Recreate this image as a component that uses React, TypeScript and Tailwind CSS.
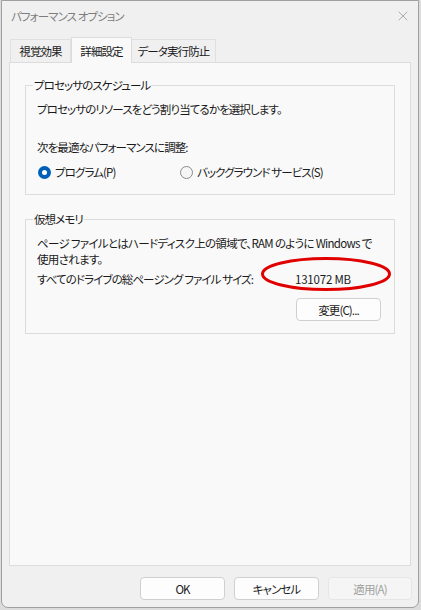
import { X } from "lucide-react";

const font = "font-['Noto_Sans_CJK_JP','Noto_Sans',sans-serif] [font-feature-settings:'palt']";

function Radio({ checked, label, className = "" }: { checked?: boolean; label: string; className?: string }) {
  return (
    <label className={`flex items-center gap-[4px] ${className}`}>
      {checked ? (
        <span className="flex h-[13px] w-[13px] items-center justify-center rounded-full bg-[#005fb8]">
          <span className="h-[5px] w-[5px] rounded-full bg-white" />
        </span>
      ) : (
        <span className="h-[13px] w-[13px] rounded-full border border-[#8a8a8a] bg-[#f6f6f6]" />
      )}
      <span>{label}</span>
    </label>
  );
}

function Button({ children, disabled }: { children: React.ReactNode; disabled?: boolean }) {
  return (
    <button
      className={
        disabled
          ? "h-[23px] w-[84px] rounded-[4px] border border-[#e6e6e6] bg-[#f5f5f5] text-[#a0a0a0]"
          : "h-[23px] w-[85px] rounded-[4px] border border-[#d0d0d0] bg-[#fdfdfd] text-[#1a1a1a]"
      }
    >
      {children}
    </button>
  );
}

function Group({ title, children, className = "" }: { title: string; children: React.ReactNode; className?: string }) {
  return (
    <fieldset className={`border border-[#dcdcdc] pl-[11px] pr-[13px] ${className}`}>
      <legend className="-ml-[4px] px-[1px] leading-[16px]">{title}</legend>
      {children}
    </fieldset>
  );
}

export default function App() {
  return (
    <div className={`h-[610px] w-[421px] bg-[#dcdcdc] text-[11.5px] leading-[16px] tracking-[-0.9px] text-[#1a1a1a] ${font}`}>
      <div className="ml-[1px] flex h-[608px] w-[418px] flex-col rounded-b-[7px] border border-[#a0a0a0] bg-[#f0f0f0]">
        <div className="flex h-[30px] items-center justify-between pl-[9px] pr-[7px] text-[#7c7c7c]">
          <span>パフォーマンス オプション</span>
          <X size={16} strokeWidth={1} className="text-[#8a8a8a]" />
        </div>

        <div className="mt-[6px] flex items-end pl-[8px]">
          <div className="flex h-[23px] w-[61px] items-center justify-center border border-b-0 border-[#e0e0e0] bg-[#f0f0f0]">視覚効果</div>
          <div className="z-10 -mb-px flex h-[26px] w-[61px] items-center justify-center border border-b-0 border-[#dcdcdc] bg-[#f9f9f9]">詳細設定</div>
          <div className="flex h-[23px] w-[84px] items-center justify-center border border-b-0 border-l-0 border-[#e0e0e0] bg-[#f0f0f0]">データ実行防止</div>
        </div>

        <div className="ml-[7px] flex h-[504px] w-[402px] flex-col border border-[#dcdcdc] bg-[#f9f9f9] px-[15px]">
          <Group title="プロセッサのスケジュール" className="mt-[14px] pb-[14px]">
            <p className="mt-[8px]">プロセッサのリソースをどう割り当てるかを選択します。</p>
            <p className="mt-[22px]">次を最適なパフォーマンスに調整:</p>
            <div className="mt-[9px] flex items-center">
              <Radio checked label="プログラム(P)" className="w-[143px] pl-px" />
              <Radio label="バックグラウンド サービス(S)" />
            </div>
          </Group>

          <Group title="仮想メモリ" className="mt-[16px] pb-[12px]">
            <p className="mt-[8px] tracking-[-0.7px]">
              ページ ファイルとはハードディスク上の領域で、RAM のように Windows で使用されます。
            </p>
            <div className="mt-[4px] flex items-center">
              <span className="w-[258px]">すべてのドライブの総ページング ファイル サイズ:</span>
              <span className="relative tracking-[-0.2px]">
                131072 MB
                <svg className="absolute left-[-35px] top-[-15px]" width="132" height="36" viewBox="0 0 132 36">
                  <ellipse cx="66" cy="18" rx="63.5" ry="15.5" fill="none" stroke="#e00000" strokeWidth="3" />
                </svg>
              </span>
            </div>
            <div className="mt-[11px] flex justify-end">
              <Button>変更(C)...</Button>
            </div>
          </Group>
        </div>

        <div className="mt-[11px] flex justify-end gap-[9px] pr-[6px]">
          <Button>OK</Button>
          <Button>キャンセル</Button>
          <Button disabled>適用(A)</Button>
        </div>
      </div>
    </div>
  );
}
